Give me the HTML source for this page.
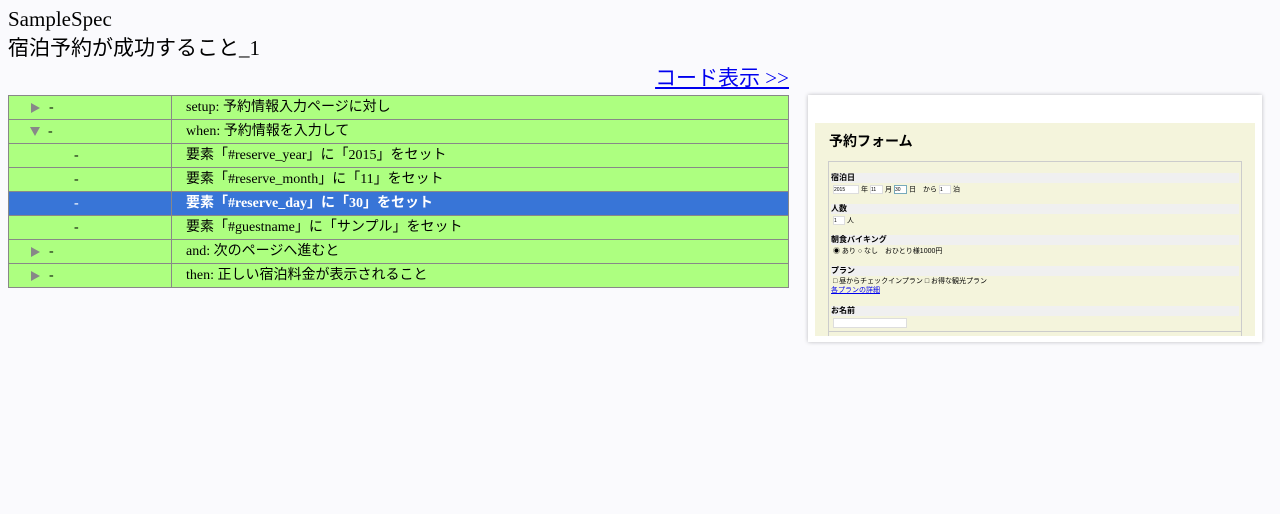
<!DOCTYPE html>
<html><head><meta charset="utf-8"><style>
body{margin:0;background:#fafafd;font-family:"Liberation Serif","Noto Sans CJK JP",serif;color:#000;width:1280px;height:514px;overflow:hidden;position:relative}
.t1{position:absolute;left:8px;top:6px;font-size:21px;line-height:26px}
.t2{position:absolute;left:8px;top:34px;font-size:21px;line-height:28px}
.lnk{position:absolute;right:491px;top:65px;font-size:21px;color:#00e;text-decoration:underline;line-height:26px;white-space:nowrap}
table{position:absolute;left:8px;top:95px;width:781px;border-collapse:collapse;table-layout:fixed;font-size:14px;border:1px solid #888}
td{background:#adff80;border:1px solid #888;height:23px;padding:0;line-height:23px;white-space:nowrap}
td.b{padding-left:14px}
.sel td{background:#3875d7;color:#fff;font-weight:bold}
.tri{display:inline-block;width:0;height:0;margin-left:22px;margin-right:9px;vertical-align:middle}
.r{border-left:9px solid #888;border-top:5px solid transparent;border-bottom:5px solid transparent}
.d{border-top:9px solid #888;border-left:5px solid transparent;border-right:5px solid transparent;margin-left:21px;margin-right:8px}
.ind{padding-left:65px}
.shot{position:absolute;left:808px;top:95px;width:454px;height:247px;background:#fff;box-shadow:0 0 4px rgba(0,0,0,.25)}
.in{position:absolute;left:7px;top:28px;width:440px;height:213px;background:#f4f4dc;font-family:"Liberation Sans","Noto Sans CJK JP",sans-serif;font-size:7px;overflow:hidden}
.in h1{position:absolute;left:14px;top:8px;margin:0;font-size:14px;font-weight:bold}
.fs{position:absolute;left:13px;top:38px;width:412px;height:180px;border:1px solid #ccc}
.lab{position:absolute;left:2px;width:408px;background:#f0f0f0;font-weight:bold;font-size:8px;height:10px;line-height:10px}
.row{position:absolute;left:2px;font-size:7px;line-height:9px;white-space:nowrap}
.ip{display:inline-block;background:#fff;border:1px solid #ddd;height:7px;vertical-align:middle;font-size:5px;margin:0 2px}
</style></head><body>
<div class="t1">SampleSpec</div>
<div class="t2">宿泊予約が成功すること_1</div>
<div class="lnk">コード表示 &gt;&gt;</div>
<table>
<colgroup><col style="width:163px"><col></colgroup>
<tr><td><span class="tri r"></span>-</td><td class="b">setup: 予約情報入力ページに対し</td></tr>
<tr><td><span class="tri d"></span>-</td><td class="b">when: 予約情報を入力して</td></tr>
<tr><td class="ind">-</td><td class="b">要素「#reserve_year」に「2015」をセット</td></tr>
<tr><td class="ind">-</td><td class="b">要素「#reserve_month」に「11」をセット</td></tr>
<tr class="sel"><td class="ind">-</td><td class="b">要素「#reserve_day」に「30」をセット</td></tr>
<tr><td class="ind">-</td><td class="b">要素「#guestname」に「サンプル」をセット</td></tr>
<tr><td><span class="tri r"></span>-</td><td class="b">and: 次のページへ進むと</td></tr>
<tr><td><span class="tri r"></span>-</td><td class="b">then: 正しい宿泊料金が表示されること</td></tr>
</table>
<div class="shot"><div class="in">
<h1>予約フォーム</h1>
<div class="fs">
<div class="lab" style="top:11px">宿泊日</div>
<div class="row" style="top:23px"><span class="ip" style="width:24px">2015</span>年<span class="ip" style="width:11px">11</span>月<span class="ip" style="width:11px;border-color:#7ab">30</span>日　から<span class="ip" style="width:10px">1</span>泊</div>
<div class="lab" style="top:42px">人数</div>
<div class="row" style="top:54px"><span class="ip" style="width:10px">1</span>人</div>
<div class="lab" style="top:73px">朝食バイキング</div>
<div class="row" style="top:85px">&nbsp;◉ あり ○ なし　おひとり様1000円</div>
<div class="lab" style="top:104px">プラン</div>
<div class="row" style="top:115px">&nbsp;□ 昼からチェックインプラン □ お得な観光プラン</div>
<div class="row" style="top:124px;color:#00e;text-decoration:underline">各プランの詳細</div>
<div class="lab" style="top:144px">お名前</div>
<div class="row" style="top:156px"><span class="ip" style="width:72px;height:8px"></span></div>
<div style="position:absolute;left:0;top:169px;width:412px;border-top:1px solid #ccc"></div>
</div>
</div></div>
</body></html>
